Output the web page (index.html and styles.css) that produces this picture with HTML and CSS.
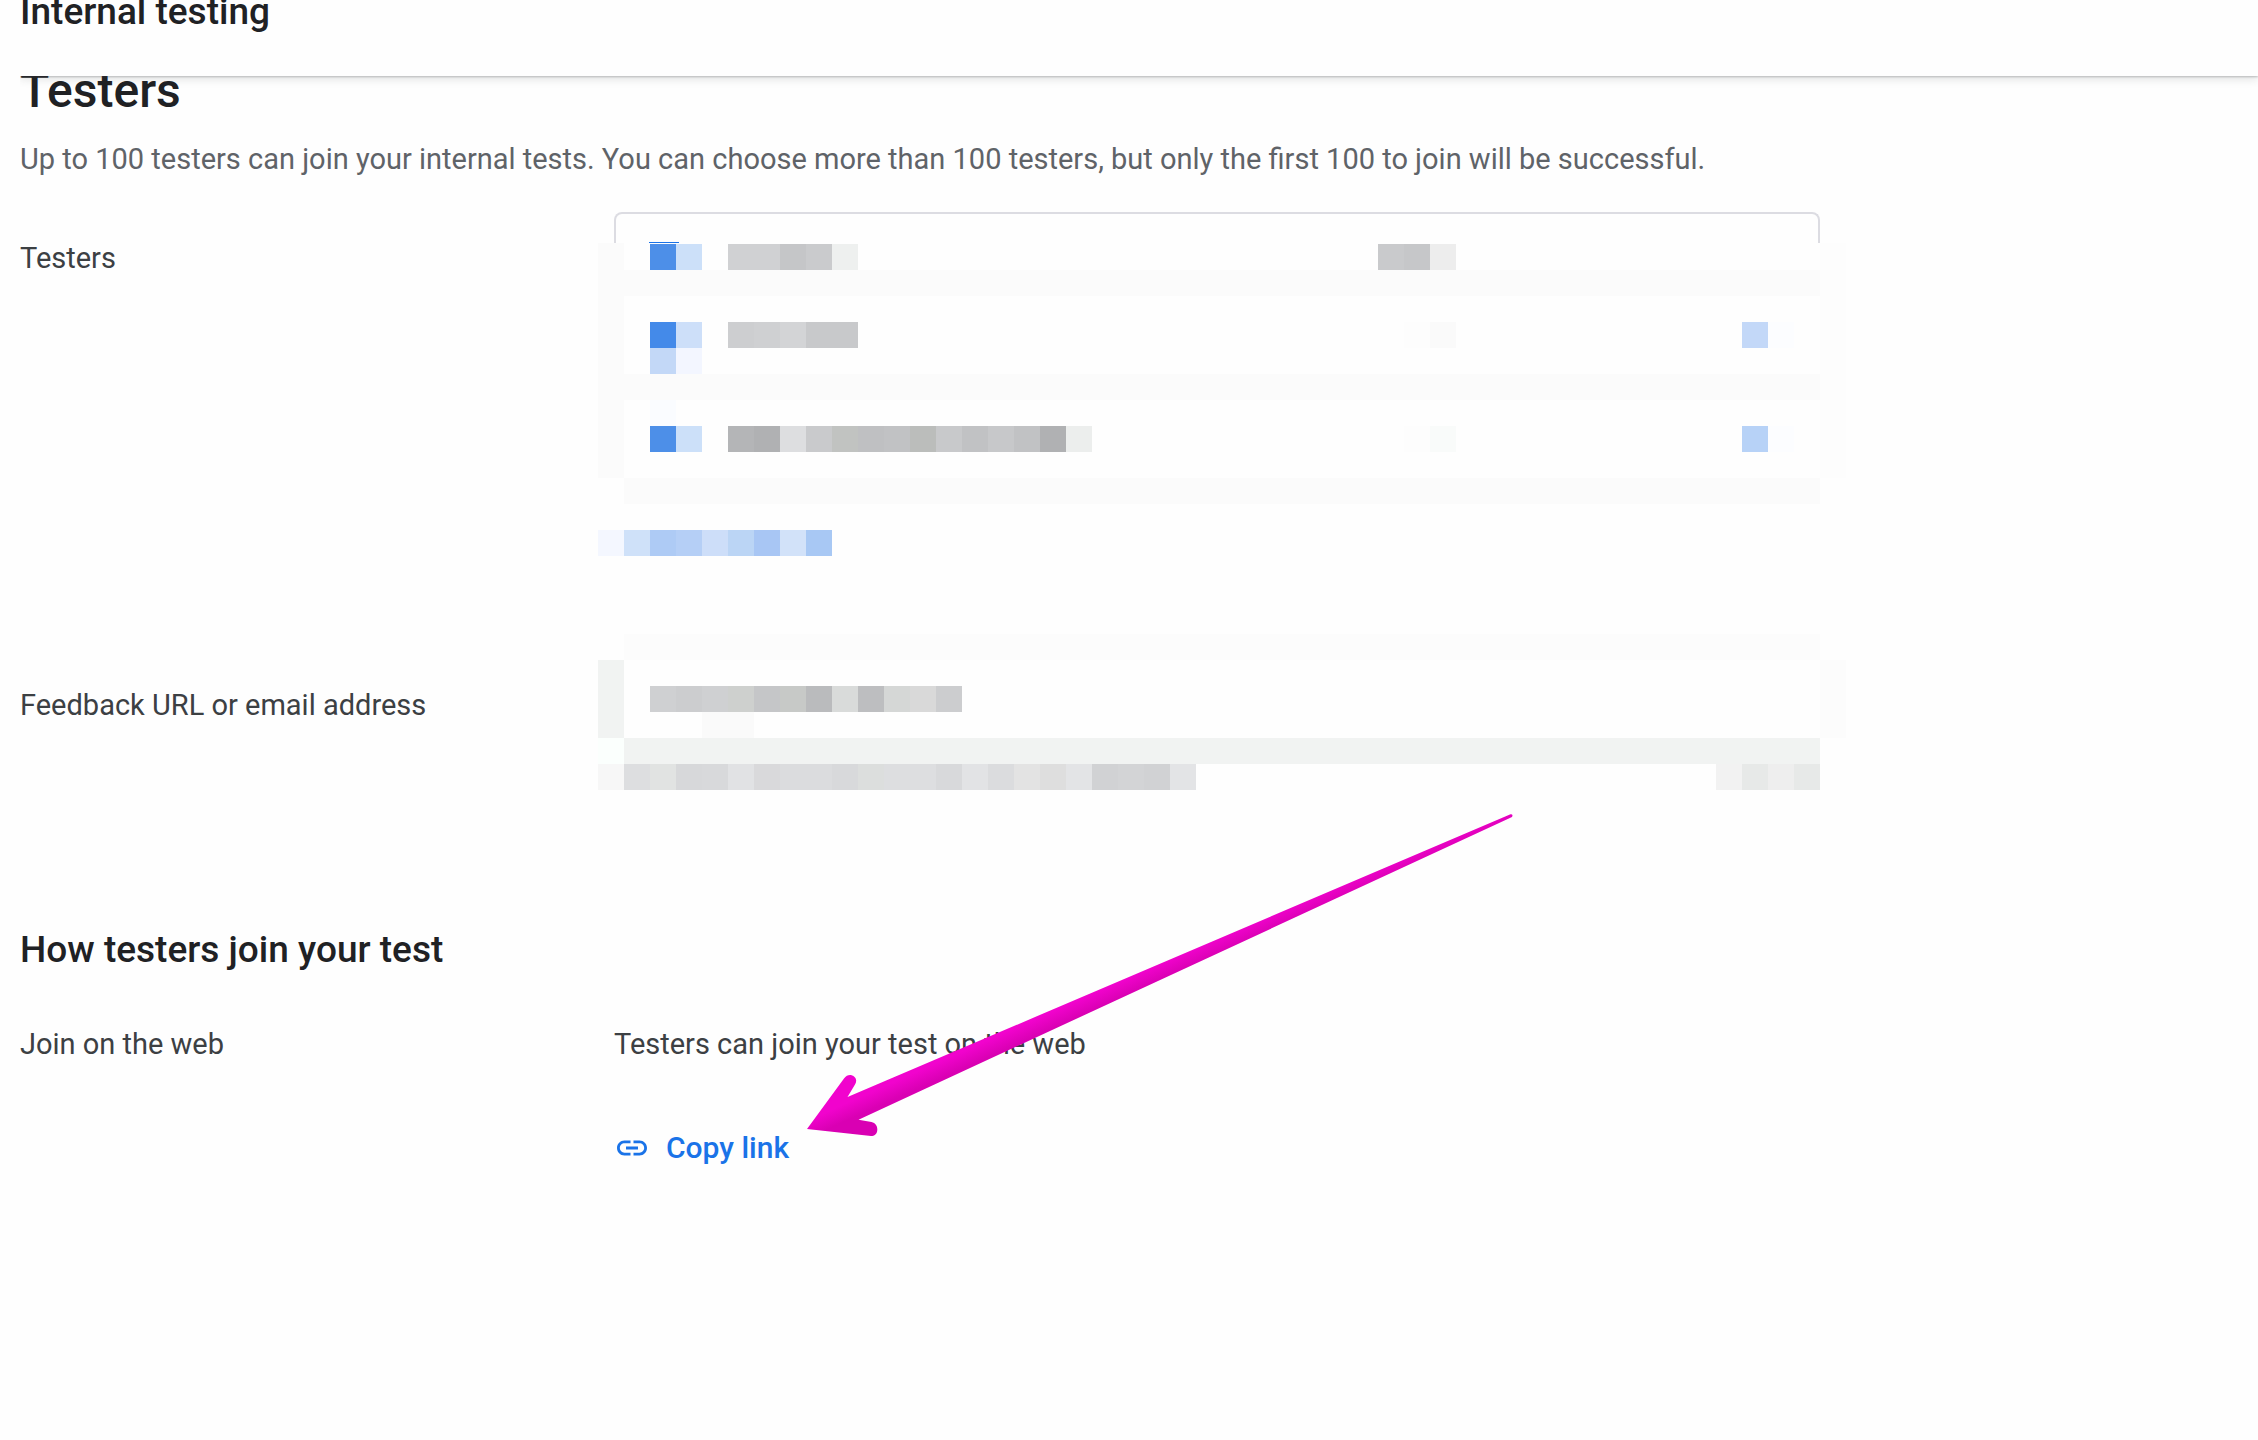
FILE: index.html
```html
<!DOCTYPE html>
<html lang="en">
<head>
<meta charset="utf-8">
<title>Internal testing</title>
<link rel="stylesheet" href="styles.css">
</head>
<body>
<header class="topbar"><p class="topbar-title">Internal testing</p></header>
<main class="page">
  <h1 class="page-title">Testers</h1>
  <p class="intro">Up to 100 testers can join your internal tests. You can choose more than 100 testers, but only the first 100 to join will be successful.</p>

  <section class="row row-testers">
    <div class="row-label">Testers</div>
    <div class="row-body">
      <div class="list-top"><span class="check-edge"></span></div>
      <table class="list">
        <colgroup><col class="col-edge"><col class="col-check"><col class="col-name"><col class="col-count"><col class="col-action"><col class="col-edge"></colgroup>
        <tr class="list-head">
          <td class="edge"></td>
          <td class="check-cell"><input type="checkbox" class="check" aria-label="Select all"></td>
          <td><svg class="mosaic" width="130" height="26" viewBox="0 0 5 1"><path fill="#d0d1d3" d="M0 0h2v1H0z"/><path fill="#c5c6c8" d="M2 0h1v1H2z"/><path fill="#cacbcd" d="M3 0h1v1H3z"/><path fill="#eef0ef" d="M4 0h1v1H4z"/></svg></td>
          <td><svg class="mosaic" width="78" height="26" viewBox="0 0 3 1"><path fill="#c9cacc" d="M0 0h1v1H0z"/><path fill="#c6c7c9" d="M1 0h1v1H1z"/><path fill="#ededed" d="M2 0h1v1H2z"/></svg></td>
          <td></td>
          <td class="edge-end"></td>
        </tr>
        <tr>
          <td class="edge"></td>
          <td class="check-cell"><input type="checkbox" class="check check-tall" aria-label="Select list"></td>
          <td><svg class="mosaic" width="130" height="26" viewBox="0 0 5 1"><path fill="#cdced0" d="M0 0h1v1H0z"/><path fill="#cfd0d2" d="M1 0h1v1H1z"/><path fill="#d3d4d6" d="M2 0h1v1H2z"/><path fill="#c8c9cb" d="M3 0h2v1H3z"/></svg></td>
          <td><svg class="mosaic" width="78" height="26" viewBox="0 0 3 1"><path fill="#fdfdfd" d="M1 0h1v1H1z"/><path fill="#fafafa" d="M2 0h1v1H2z"/></svg></td>
          <td><svg class="mosaic" width="52" height="26" viewBox="0 0 2 1"><path fill="#c3d8f8" d="M0 0h1v1H0z"/><path fill="#fcfdff" d="M1 0h1v1H1z"/></svg></td>
          <td class="edge-end"></td>
        </tr>
        <tr class="list-last">
          <td class="edge"></td>
          <td class="check-cell"><input type="checkbox" class="check check-raised" aria-label="Select list"></td>
          <td><svg class="mosaic" width="364" height="26" viewBox="0 0 14 1"><path fill="#b4b5b7" d="M0 0h1v1H0z"/><path fill="#b0b1b3" d="M1 0h1v1H1z"/><path fill="#dddee0" d="M2 0h1v1H2z"/><path fill="#c9cacc" d="M3 0h1v1H3z"/><path fill="#c1c3c1" d="M4 0h1v1H4z"/><path fill="#bfc0c2" d="M5 0h1v1H5z"/><path fill="#c1c2c4" d="M6 0h1v1H6z"/><path fill="#bbbdbb" d="M7 0h1v1H7z"/><path fill="#c8c9cb" d="M8 0h1v1H8z"/><path fill="#c1c2c4" d="M9 0h1v1H9z"/><path fill="#c7c8ca" d="M10 0h1v1h-1z"/><path fill="#c1c2c4" d="M11 0h1v1h-1z"/><path fill="#b0b1b3" d="M12 0h1v1h-1z"/><path fill="#eceeed" d="M13 0h1v1h-1z"/></svg></td>
          <td><svg class="mosaic" width="78" height="26" viewBox="0 0 3 1"><path fill="#fdfdfd" d="M1 0h1v1H1z"/><path fill="#f9fbfa" d="M2 0h1v1H2z"/></svg></td>
          <td><svg class="mosaic" width="52" height="26" viewBox="0 0 2 1"><path fill="#b7d2f7" d="M0 0h1v1H0z"/><path fill="#fcfdff" d="M1 0h1v1H1z"/></svg></td>
          <td class="edge-end"></td>
        </tr>
      </table>
      <button type="button" class="create" aria-label="Create list"><svg class="mosaic" width="234" height="26" viewBox="0 0 9 1"><path fill="#f4f7ff" d="M0 0h1v1H0z"/><path fill="#cfe1f9" d="M1 0h1v1H1z"/><path fill="#aecbf5" d="M2 0h1v1H2z"/><path fill="#b5cff6" d="M3 0h1v1H3z"/><path fill="#cddef9" d="M4 0h1v1H4z"/><path fill="#bbd5f5" d="M5 0h1v1H5z"/><path fill="#a8c6f4" d="M6 0h1v1H6z"/><path fill="#d2e2f9" d="M7 0h1v1H7z"/><path fill="#a8c8f4" d="M8 0h1v1H8z"/></svg></button>
    </div>
  </section>

  <section class="row row-feedback">
    <label class="row-label" for="feedback">Feedback URL or email address</label>
    <div class="row-body">
      <div class="field">
        <input id="feedback" class="field-input" type="text">
        <svg class="mosaic field-value" width="312" height="52" viewBox="0 0 12 2"><path fill="#cfd0d2" d="M0 0h1v1H0z"/><path fill="#cccdcf" d="M1 0h1v1H1z"/><path fill="#cfd0d2" d="M2 0h1v1H2z"/><path fill="#ced0ce" d="M3 0h1v1H3z"/><path fill="#c5c6c8" d="M4 0h1v1H4z"/><path fill="#c7c9c7" d="M5 0h1v1H5z"/><path fill="#babbbd" d="M6 0h1v1H6z"/><path fill="#d9dbda" d="M7 0h1v1H7z"/><path fill="#bdbec0" d="M8 0h1v1H8z"/><path fill="#d5d7d6" d="M9 0h1v1H9z"/><path fill="#d9d9d9" d="M10 0h1v1h-1z"/><path fill="#cccdcf" d="M11 0h1v1h-1z"/><path fill="#fafafa" d="M2 1h2v1H2z"/></svg>
      </div>
      <div class="field-base"></div>
      <div class="field-help">
        <svg class="mosaic" width="598" height="26" viewBox="0 0 23 1"><path fill="#f7f7f7" d="M0 0h1v1H0z"/><path fill="#dddee0" d="M1 0h1v1H1z"/><path fill="#e1e3e2" d="M2 0h1v1H2z"/><path fill="#d7d8da" d="M3 0h1v1H3z"/><path fill="#d8d9db" d="M4 0h1v1H4z"/><path fill="#e1e2e4" d="M5 0h1v1H5z"/><path fill="#d9d9db" d="M6 0h1v1H6z"/><path fill="#dbdcde" d="M7 0h2v1H7z"/><path fill="#d8d9db" d="M9 0h1v1H9z"/><path fill="#dcdedd" d="M10 0h1v1h-1z"/><path fill="#dddee0" d="M11 0h2v1h-2z"/><path fill="#d8d9db" d="M13 0h1v1h-1z"/><path fill="#e2e3e5" d="M14 0h1v1h-1z"/><path fill="#dbdcde" d="M15 0h1v1h-1z"/><path fill="#e3e3e3" d="M16 0h1v1h-1z"/><path fill="#dedede" d="M17 0h1v1h-1z"/><path fill="#e3e4e6" d="M18 0h1v1h-1z"/><path fill="#d1d2d4" d="M19 0h1v1h-1z"/><path fill="#d3d4d6" d="M20 0h1v1h-1z"/><path fill="#d1d2d4" d="M21 0h1v1h-1z"/><path fill="#e3e4e6" d="M22 0h1v1h-1z"/></svg>
        <svg class="mosaic" width="104" height="26" viewBox="0 0 4 1"><path fill="#f2f2f2" d="M0 0h1v1H0z"/><path fill="#e7e9e8" d="M1 0h1v1H1z"/><path fill="#eee" d="M2 0h1v1H2z"/><path fill="#e7e9e8" d="M3 0h1v1H3z"/></svg>
      </div>
    </div>
  </section>

  <h2 class="section-title">How testers join your test</h2>
  <section class="row row-join">
    <div class="row-label">Join on the web</div>
    <div class="row-body join">
      <p class="join-text">Testers can join your test on the web</p>
      <button type="button" class="copy">
        <svg class="copy-icon" viewBox="0 0 24 24" aria-hidden="true"><path fill="currentColor" d="M3.9 12c0-1.71 1.39-3.1 3.1-3.1h4V7H7c-2.76 0-5 2.24-5 5s2.24 5 5 5h4v-1.9H7c-1.71 0-3.1-1.39-3.1-3.1zM8 13h8v-2H8v2zm9-6h-4v1.9h4c1.71 0 3.1 1.39 3.1 3.1s-1.39 3.1-3.1 3.1h-4V17h4c2.76 0 5-2.24 5-5s-2.24-5-5-5z"/></svg>
        <span>Copy link</span>
      </button>
    </div>
  </section>

  <svg class="arrow" viewBox="800 804 720 340" aria-hidden="true">
    <defs><linearGradient id="shade" gradientUnits="userSpaceOnUse" x1="896.74" y1="1080.7" x2="903.26" y2="1095.3"><stop offset="0" stop-color="#f103cd"/><stop offset="1" stop-color="#d900b3"/></linearGradient></defs>
    <path fill="url(#shade)" d="M807 1129L844 1078.500C847 1074.500 851 1074 854 1076.500C857 1079 856.500 1082 855 1084.500L847.500 1097L1510.500 814.200Q1512.500 814 1512.500 815.500Q1512.500 816.800 1511.500 817.200L858.500 1119.700L871.500 1122C875.500 1123 877.500 1126 877.300 1130C877 1134 874.500 1136 871 1136Z"/>
  </svg>
</main>
</body>
</html>
```
FILE: styles.css
```css
* { box-sizing: border-box; }

body {
  margin: 0;
  background: #fefefe;
  color: #3c4043;
  font: 400 29px/40px Roboto, "Liberation Sans", sans-serif;
}

h1, h2, p { margin: 0; }
button { border: 0; padding: 0; background: none; font: inherit; cursor: pointer; }

.topbar {
  position: relative;
  z-index: 1;
  display: flex;
  align-items: flex-start;
  height: 76px;
  margin-left: 20px;
  background: #fefefe;
  box-shadow: 0 1px 2px rgba(60, 64, 67, .3), 0 4px 8px rgba(60, 64, 67, .12);
  clip-path: inset(0 0 -16px 0);
}
.topbar-title {
  margin-top: -8px;
  color: #202124;
  font-size: 37px;
  font-weight: 500;
}

.page { position: relative; margin-top: -12px; padding: 0 20px 240px; }
.page-title { color: #202124; font-size: 48px; font-weight: 500; line-height: 54px; }
.intro { margin-top: 21px; color: #5f6368; }
.section-title { margin-top: 140px; color: #202124; font-size: 37px; font-weight: 500; line-height: 40px; }

.row { display: grid; grid-template-columns: 578px minmax(0, 1248px); }
.row-testers { margin-top: 33px; }
.row-testers .row-label { padding-top: 26px; }
.row-feedback { margin-top: 78px; }
.row-feedback .row-label { padding-top: 51px; }
.row-join { margin-top: 54px; }

.mosaic { display: block; shape-rendering: crispEdges; }

/* Tester lists */
.list-top {
  display: flex;
  align-items: flex-end;
  height: 31px;
  margin: 0 26px 0 16px;
  padding-left: 33px;
  border: 2px solid #dcdce2;
  border-bottom: 0;
  border-radius: 8px 8px 0 0;
}
.check-edge { width: 30px; height: 1px; background: #1a73e8; }

.list { width: 100%; table-layout: fixed; border-collapse: separate; border-spacing: 0; }
.col-edge { width: 26px; }
.col-check { width: 104px; }
.col-name { width: 650px; }
.col-count { width: 364px; }
.list td {
  height: 104px;
  padding: 26px 0 0;
  border-bottom: 26px solid #fbfbfb;
  vertical-align: top;
}
.list .list-head td { height: 53px; padding-top: 1px; }
.list .check-cell { padding-left: 26px; }
.list .edge { background: #fbfbfb; }
.list .edge-end { background: #fdfdfd; border-bottom-color: #fdfdfd; }
.list-last .edge, .list-last .edge-end { background-clip: padding-box; }
.list .list-last .edge, .list .list-last .edge-end { border-bottom-color: #fefefe; }

.check {
  appearance: none;
  display: block;
  width: 26px;
  height: 26px;
  margin: 0;
  background: #4d8fe8;
  box-shadow: 26px 0 #cce0f9;
}
.check-tall {
  background: #448ae9;
  box-shadow: 26px 0 #cddff9, 0 26px #c3d8f7, 26px 26px #f3f6ff;
}
.check-raised { box-shadow: 26px 0 #cce0f9, 0 -26px #fafcff; }

.create { display: block; margin-top: 26px; }

/* Feedback address */
.field {
  position: relative;
  border: solid #fcfcfc;
  border-width: 0 26px 0 26px;
  border-left-color: #f1f3f2;
  margin-top: 26px;
}
.field::before {
  content: "";
  position: absolute;
  inset: -26px 0 auto;
  height: 26px;
  background: #fcfcfc;
}
.field-input {
  display: block;
  width: 100%;
  height: 78px;
  padding: 0 26px;
  border: 0;
  background: #fefefe;
  color: inherit;
  font: inherit;
}
.field-value { position: absolute; top: 26px; left: 26px; pointer-events: none; }
.field-base { height: 26px; margin-right: 26px; border-left: 26px solid #fbfffd; background: #f1f3f2; }
.field-help { display: flex; justify-content: space-between; margin-right: 26px; }

/* Join link */
.join { display: flex; flex-direction: column; align-items: flex-start; gap: 64px; padding-left: 16px; }
.copy { display: flex; align-items: center; gap: 16px; color: #1a73e8; font-size: 30px; font-weight: 500; }
.copy-icon { width: 36px; height: 36px; }

.arrow { position: absolute; top: 740px; left: 800px; width: 720px; height: 340px; pointer-events: none; }
```
